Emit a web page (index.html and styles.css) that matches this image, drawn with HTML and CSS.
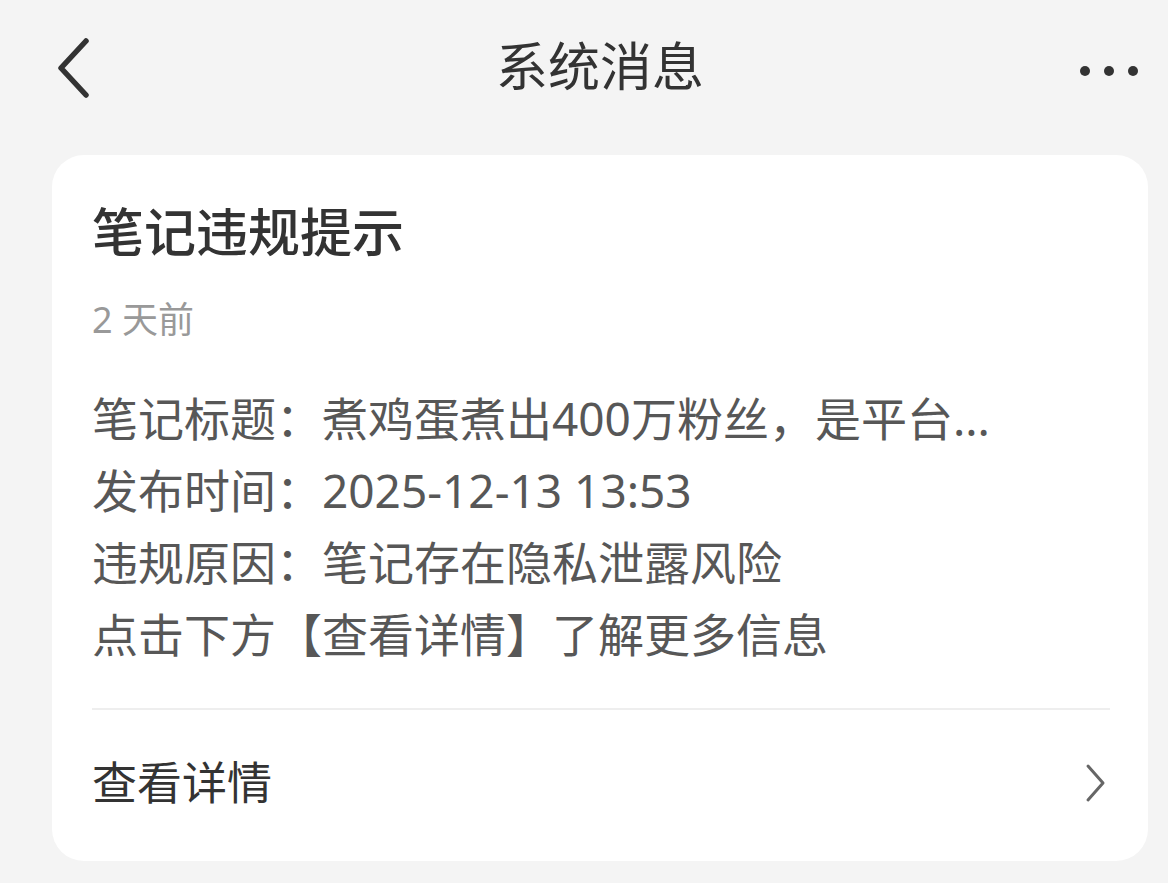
FILE: index.html
```html
<!DOCTYPE html>
<html lang="zh-CN">

<head>
    <meta charset="UTF-8">
    <title>系统消息</title>
    <link rel="stylesheet" href="styles.css">
</head>

<body>
    <div class="topbar">
        <a class="back" href="#">
            <svg width="34" height="64" viewBox="0 0 34 64">
                <polyline points="29,3 4,30 29,57" fill="none" stroke="#333" stroke-width="5.5"
                    stroke-linecap="round" stroke-linejoin="round" />
            </svg>
        </a>
        <h1 class="page-title">系统消息</h1>
        <div class="more">
            <span></span><span></span><span></span>
        </div>
    </div>

    <div class="card">
        <h2 class="card-title">笔记违规提示</h2>
        <div class="time">2 天前</div>

        <div class="content">
            <p>笔记标题：煮鸡蛋煮出400万粉丝，是平台...</p>
            <p>发布时间：2025-12-13 13:53</p>
            <p>违规原因：笔记存在隐私泄露风险</p>
            <p>点击下方【查看详情】了解更多信息</p>
        </div>

        <a class="details" href="#">
            <span>查看详情</span>
            <svg width="22" height="40" viewBox="0 0 22 40">
                <polyline points="3,3 18,20 3,37" fill="none" stroke="#666" stroke-width="3"
                    stroke-linecap="round" stroke-linejoin="round" />
            </svg>
        </a>
    </div>
</body>

</html>
```

FILE: styles.css
```css
body {
    font-family: "Noto Sans", "Noto Sans CJK SC", sans-serif;
    background-color: #f4f4f4;
    margin: 0;
    padding: 0;
    color: #333;
}

.topbar {
    display: grid;
    grid-template-columns: 1fr auto 1fr;
    align-items: center;
    height: 132px;
    padding: 0 20px 0 52px;
}

.back {
    justify-self: start;
    display: flex;
    margin-left: 5px;
    margin-top: 7px;
}

.page-title {
    margin: 0;
    font-size: 52px;
    font-weight: 400;
    line-height: 1;
    color: #333;
}

.more {
    justify-self: end;
    display: flex;
    gap: 14px;
    margin-right: 10px;
    margin-top: 10px;
}

.more span {
    width: 10px;
    height: 10px;
    border-radius: 50%;
    background-color: #333;
}

.card {
    margin: 23px 20px 0 52px;
    padding: 43px 38px 0 40px;
    background: #fff;
    border-radius: 32px;
}

.card-title {
    margin: 0;
    font-size: 52px;
    font-weight: 500;
    line-height: 68px;
    color: #333;
}

.time {
    margin-top: 29px;
    font-size: 36px;
    line-height: 50px;
    color: #999;
}

.content {
    margin-top: 37px;
    padding-bottom: 38px;
    border-bottom: 2px solid #eeeeee;
}

.content p {
    margin: 0;
    font-size: 46px;
    line-height: 72px;
    color: #575757;
    white-space: nowrap;
}

.details {
    display: flex;
    justify-content: space-between;
    align-items: center;
    height: 140px;
    padding-bottom: 11px;
    text-decoration: none;
    color: #333;
    font-size: 45px;
}

.details svg {
    margin-right: 3px;
    margin-top: 6px;
}
```
